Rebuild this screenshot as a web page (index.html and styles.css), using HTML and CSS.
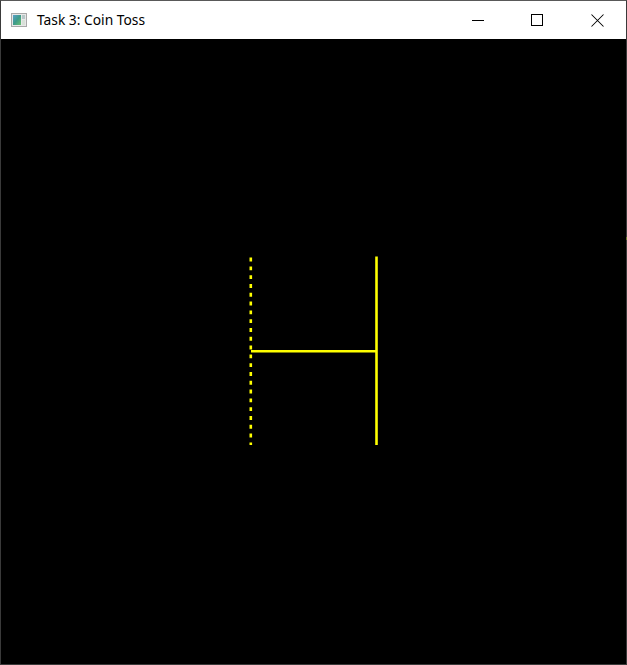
FILE: index.html
```html
<!DOCTYPE html>
<html>
<head>
<meta charset="utf-8">
<title>Task 3: Coin Toss</title>
<link rel="stylesheet" href="styles.css">
</head>
<body>
<div class="window">
  <div class="titlebar">
    <div class="title-left">
      <svg class="app-icon" width="16" height="16" viewBox="0 0 16 16">
        <defs>
          <linearGradient id="g" x1="0" y1="0" x2="1" y2="1">
            <stop offset="0" stop-color="#5aa0c8"/>
            <stop offset="0.5" stop-color="#3d9a8a"/>
            <stop offset="1" stop-color="#6cc070"/>
          </linearGradient>
        </defs>
        <rect x="0.5" y="1.5" width="15" height="13" fill="#e8e8e8" stroke="#a8a8a8"/>
        <rect x="2" y="3" width="8" height="10" fill="url(#g)"/>
        <rect x="11" y="3" width="3" height="4" fill="#b8c8c8"/>
        <rect x="11" y="8" width="3" height="5" fill="#d8e0d8"/>
      </svg>
      <span class="title-text">Task 3: Coin Toss</span>
    </div>
    <div class="controls">
      <div class="ctl ctl-min">
        <svg width="12" height="12" viewBox="0 0 12 12"><line x1="0" y1="6.5" x2="12" y2="6.5" stroke="#000" stroke-width="1"/></svg>
      </div>
      <div class="ctl ctl-max">
        <svg width="12" height="12" viewBox="0 0 12 12"><rect x="0.5" y="0.5" width="11" height="11" fill="none" stroke="#000" stroke-width="1"/></svg>
      </div>
      <div class="ctl ctl-close">
        <svg width="13" height="13" viewBox="0 0 13 13"><path d="M0.5 0.5 L12.5 12.5 M12.5 0.5 L0.5 12.5" stroke="#000" stroke-width="1.05" fill="none"/></svg>
      </div>
    </div>
  </div>
  <div class="canvas">
    <svg class="drawing" width="625" height="625" viewBox="0 0 625 625">
      <line x1="249.8" y1="218.6" x2="249.8" y2="406" stroke="#ffff00" stroke-width="2.6" stroke-dasharray="3.9 4.9"/>
      <line x1="375.5" y1="217.5" x2="375.5" y2="406" stroke="#ffff00" stroke-width="2.6"/>
      <line x1="250" y1="312.3" x2="375.5" y2="312.3" stroke="#ffff00" stroke-width="2.4"/>
    </svg>
    <span class="edge-mark"></span>
  </div>
</div>
</body>
</html>
```
FILE: styles.css
```css
html, body {
  margin: 0;
  padding: 0;
  background: #000;
}
.window {
  width: 625px;
  height: 663px;
  border: 1px solid #3a3a3a;
  border-top-color: #595959;
  display: flex;
  flex-direction: column;
  background: #000;
}
.titlebar {
  height: 38px;
  background: #fff;
  display: flex;
  align-items: stretch;
  justify-content: space-between;
  flex: none;
}
.title-left {
  display: flex;
  align-items: center;
  padding-left: 10px;
  gap: 10px;
}
.app-icon {
  display: block;
}
.title-text {
  font-family: "Noto Sans", "Open Sans", sans-serif;
  font-size: 13.8px;
  color: #000;
  line-height: 1;
}
.controls {
  display: flex;
  align-items: stretch;
}
.ctl {
  width: 58px;
  display: flex;
  align-items: center;
  justify-content: center;
  box-sizing: border-box;
}
.ctl-min {
  padding-right: 6px;
}
.ctl-max {
  padding-right: 5px;
}
.ctl-close {
  padding-right: 0;
}
.ctl svg {
  display: block;
}
.canvas {
  flex: 1;
  background: #000;
  position: relative;
}
.drawing {
  display: block;
}
.edge-mark {
  position: absolute;
  right: -1px;
  top: 198px;
  width: 1px;
  height: 3px;
  background: #6a7a2a;
}
```
